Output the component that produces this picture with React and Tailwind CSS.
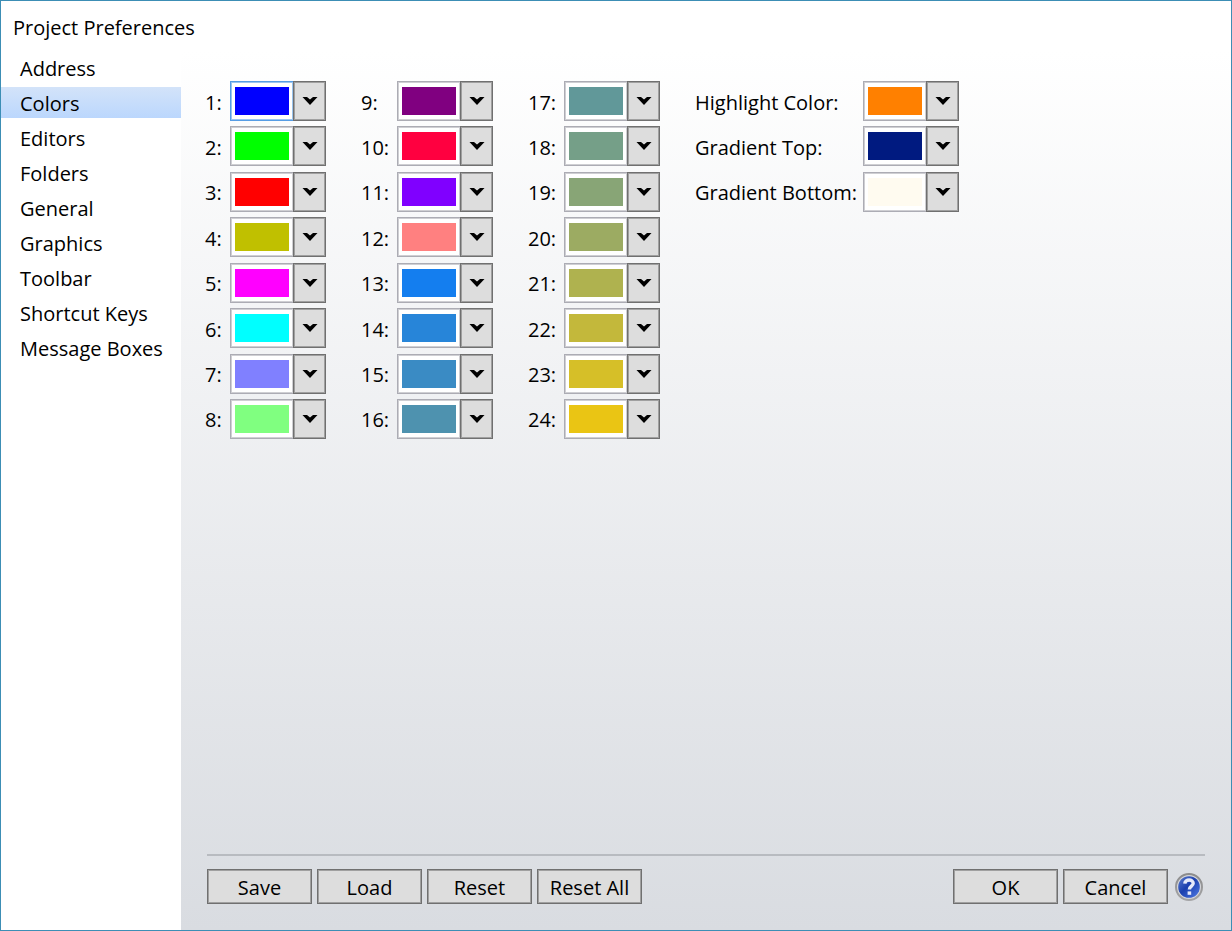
import React, { useState } from 'react';
import clsx from 'clsx';

const PAGES = [
  'Address',
  'Colors',
  'Editors',
  'Folders',
  'General',
  'Graphics',
  'Toolbar',
  'Shortcut Keys',
  'Message Boxes',
];

const INDEXED = [
  '#0000ff', '#00ff00', '#ff0000', '#c0c000', '#ff00ff', '#00ffff', '#8080ff', '#80ff80',
  '#800080', '#ff0040', '#8000ff', '#ff8080', '#147eef', '#2785d9', '#3a8bc4', '#4e92af',
  '#619899', '#759f88', '#88a576', '#9cab62', '#afb24f', '#c3b83b', '#d6bf28', '#eac514',
];

const NAMED = [
  { id: 'highlight', label: 'Highlight Color:', color: '#ff8000' },
  { id: 'gradient-top', label: 'Gradient Top:', color: '#001a80' },
  { id: 'gradient-bottom', label: 'Gradient Bottom:', color: '#fffbf0' },
];

const PALETTE = [...INDEXED, ...NAMED.map((n) => n.color)];

const ColorPicker = ({ id, label, initial, focused, labelClass }) => {
  const [color, setColor] = useState(initial);

  return (
    <div className="flex h-10 items-center">
      <label htmlFor={id} className={clsx('shrink-0 whitespace-nowrap pt-[3px]', labelClass)}>
        {label}
      </label>
      <div className="relative flex h-10 w-24">
        <div
          className={clsx(
            'flex-1 border border-r-0 bg-white px-1 py-[5px] inset-ring',
            focused ? 'border-[#569de5] inset-ring-[#9ac5ef]' : 'border-[#acacb4] inset-ring-[#cfcfd3]'
          )}
        >
          <div className="h-7" style={{ backgroundColor: color }}></div>
        </div>
        <div className="flex w-[33px] items-center justify-center border border-[#707070] bg-[#dddddd] inset-ring inset-ring-[#a0a0a0]">
          <svg className="h-2 w-4" viewBox="0 0 16 8" fill="black">
            <path d="M0.5 0H5L8 2.6L11 0H15.5L8 8Z" />
          </svg>
        </div>
        {/* native list sits on top so the swatch opens it */}
        <select
          id={id}
          value={color}
          onChange={(e) => setColor(e.target.value)}
          className="absolute inset-0 cursor-pointer opacity-0"
        >
          {PALETTE.map((c) => (
            <option key={c} value={c} style={{ backgroundColor: c }}>{c}</option>
          ))}
        </select>
      </div>
    </div>
  );
};

const Button = ({ children }) => (
  <button className="h-[35px] w-[105px] border border-[#707070] bg-[#dddddd] pt-[3px] whitespace-nowrap inset-ring inset-ring-[#a0a0a0] hover:bg-[#bee6fd]">
    {children}
  </button>
);

const HelpIcon = () => (
  <svg className="h-7 w-7" viewBox="0 0 28 28">
    <defs>
      <linearGradient id="help-ring" x1="0" y1="0" x2="0" y2="1">
        <stop offset="0" stopColor="#8c8c8c" />
        <stop offset="1" stopColor="#a4a4a6" />
      </linearGradient>
      <linearGradient id="help-fill" x1="0" y1="0" x2="1" y2="1">
        <stop offset="0" stopColor="#5f80d0" />
        <stop offset="0.45" stopColor="#1b3fae" />
        <stop offset="1" stopColor="#4f7be6" />
      </linearGradient>
    </defs>
    <circle cx="14" cy="14" r="13" fill="#d5d6da" stroke="url(#help-ring)" strokeWidth="2" />
    <circle cx="14" cy="14" r="10.8" fill="url(#help-fill)" />
    <path d="M9.8 10.6C10 5.8 18.2 6 18.2 10.3C18.2 13.2 14.4 13.2 14.4 16.6" fill="none" stroke="#e6eafa" strokeWidth="3.4" />
    <rect x="12.6" y="18.4" width="3.6" height="3.4" fill="#e6eafa" />
  </svg>
);

export default function App() {
  const [page, setPage] = useState('Colors');

  return (
    <div className="flex min-h-screen flex-col border border-[#3c8eb5] bg-white font-['Open_Sans','Noto_Sans',sans-serif] text-[20px] leading-7 text-black">
      <h1 className="h-[50px] pt-[13px] pl-3">Project Preferences</h1>
      <div className="flex flex-1">
        <nav className="flex w-[180px] shrink-0 flex-col gap-1 pt-px">
          {PAGES.map((name) => (
            <button
              key={name}
              onClick={() => setPage(name)}
              className={clsx(
                'h-[31px] pt-[3px] pl-[19px] text-left whitespace-nowrap',
                page === name && 'bg-linear-to-b from-[#d3e3f9] to-[#bbd7fd]'
              )}
            >
              {name}
            </button>
          ))}
        </nav>

        <main className="flex flex-1 flex-col bg-linear-to-b from-white to-[#d9dce1] px-[26px] pb-[26px]">
          <div className="-ml-[2px] grid h-[388px] grid-flow-col grid-rows-[repeat(8,40px)] content-between justify-start gap-x-[35px] pt-[30px]">
            {INDEXED.map((color, i) => (
              <ColorPicker
                key={i}
                id={`color-${i + 1}`}
                label={`${i + 1}:`}
                initial={color}
                focused={i === 0}
                labelClass={i < 8 ? 'w-[25px]' : 'w-9'}
              />
            ))}
            {NAMED.map(({ id, label, color }) => (
              <ColorPicker key={id} id={id} label={label} initial={color} labelClass="w-[168px]" />
            ))}
          </div>

          <footer className="mt-auto border-t-2 border-[#b8bbc0] pt-[13px]">
            <div className="flex items-center gap-[5px]">
              <Button>Save</Button>
              <Button>Load</Button>
              <Button>Reset</Button>
              <Button>Reset All</Button>
              <div className="flex-1"></div>
              <Button>OK</Button>
              <Button>Cancel</Button>
              <button aria-label="Help" className="mx-[2px]">
                <HelpIcon />
              </button>
            </div>
          </footer>
        </main>
      </div>
    </div>
  );
}
